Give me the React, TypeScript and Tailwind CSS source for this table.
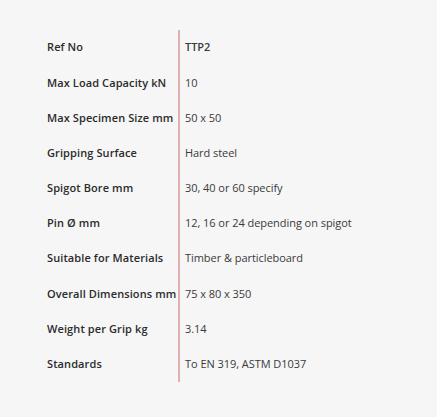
const rows: [string, string][] = [
  ["Ref No", "TTP2"],
  ["Max Load Capacity kN", "10"],
  ["Max Specimen Size mm", "50 x 50"],
  ["Gripping Surface", "Hard steel"],
  ["Spigot Bore mm", "30, 40 or 60 specify"],
  ["Pin Ø mm", "12, 16 or 24 depending on spigot"],
  ["Suitable for Materials", "Timber & particleboard"],
  ["Overall Dimensions mm", "75 x 80 x 350"],
  ["Weight per Grip kg", "3.14"],
  ["Standards", "To EN 319, ASTM D1037"],
];

export default function App() {
  return (
    <div
      className="w-[437px] h-[417px] bg-[#f6f6f6] pt-[30px] pl-[47px] text-[#2b2b2b]"
      style={{ fontFamily: '"Open Sans", "Liberation Sans", sans-serif' }}
    >
      <div className="flex flex-col">
        {rows.map(([k, v], i) => (
          <div key={k} className="flex h-[35.2px]">
            <div className="w-[133px] shrink-0 flex items-center text-[11px] font-semibold tracking-[0.1px] border-r-2 border-[#e0b0b0]">
              {k}
            </div>
            <div
              className={
                "pl-[5px] flex items-center text-[11px] tracking-[-0.05px] text-[#3a3a3a] " +
                (i === 0 ? "font-semibold" : "")
              }
            >
              {v}
            </div>
          </div>
        ))}
      </div>
    </div>
  );
}
